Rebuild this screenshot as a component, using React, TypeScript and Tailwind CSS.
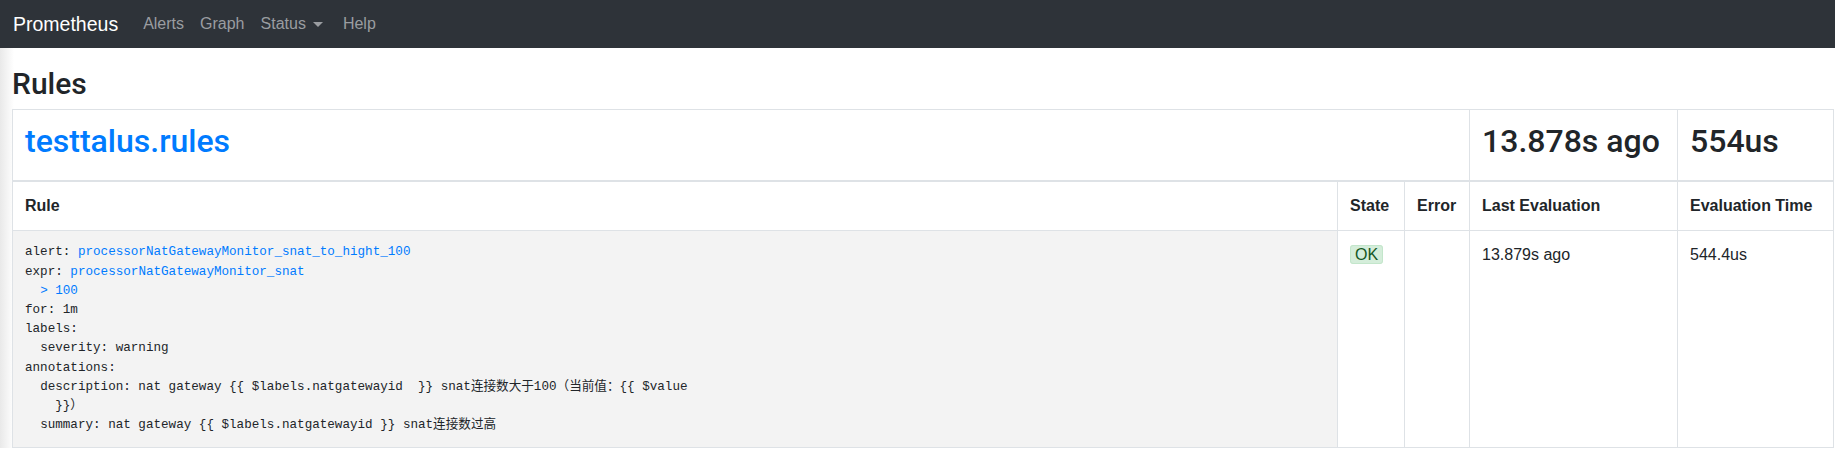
import React from "react";

function NavLink({ children }: { children: React.ReactNode }) {
  return <span className="px-2 text-[16px] leading-6 text-[#9a9da1]">{children}</span>;
}

export default function App() {
  return (
    <div className="min-h-[450px] bg-white font-['Liberation_Sans',Arial,sans-serif] text-[#212529]">
      <nav className="flex h-12 items-center bg-[#2e3339] pl-[13px]">
        <span className="mr-[17px] text-[19.5px] leading-[30px] text-white">Prometheus</span>
        <NavLink>Alerts</NavLink>
        <NavLink>Graph</NavLink>
        <span className="flex items-center pl-2 pr-3 text-[16px] leading-6 text-[#9a9da1]">
          Status
          <span className="ml-[7px] inline-block h-0 w-0 border-x-[5px] border-t-[5px] border-x-transparent border-t-[#9a9da1]" />
        </span>
        <NavLink>Help</NavLink>
      </nav>
      <div className="bg-[linear-gradient(to_right,#e9e9e9,#ffffff_14px)] pl-3 pr-[1px]">
        <h1 className="mb-[6px] pt-[17px] font-['Roboto','Liberation_Sans',sans-serif] text-[30px] leading-[38px] font-medium">Rules</h1>
        <table className="w-full table-fixed border-collapse bg-white">
          <colgroup>
            <col />
            <col className="w-[67px]" />
            <col className="w-[65px]" />
            <col className="w-[208px]" />
            <col className="w-[156px]" />
          </colgroup>
          <thead>
            <tr className="font-['Roboto','Liberation_Sans',sans-serif]">
              <td colSpan={3} className="border border-b-2 border-[#dee2e6] p-3 align-top">
                <h2 className="mb-2 text-[32px] leading-[38.4px] font-medium text-[#007bff]">testtalus.rules</h2>
              </td>
              <td className="border border-b-2 border-[#dee2e6] p-3 align-top">
                <h2 className="mb-2 whitespace-nowrap text-[32px] leading-[38.4px] font-medium">13.878s ago</h2>
              </td>
              <td className="border border-b-2 border-[#dee2e6] p-3 align-top">
                <h2 className="mb-2 text-[32px] leading-[38.4px] font-medium">554us</h2>
              </td>
            </tr>
          </thead>
          <tbody>
            <tr className="text-[16px] leading-6 font-bold">
              <td className="border border-[#dee2e6] p-3 align-top">Rule</td>
              <td className="border border-[#dee2e6] p-3 align-top">State</td>
              <td className="border border-[#dee2e6] p-3 align-top">Error</td>
              <td className="border border-[#dee2e6] p-3 align-top">Last Evaluation</td>
              <td className="border border-[#dee2e6] p-3 align-top whitespace-nowrap">Evaluation Time</td>
            </tr>
            <tr className="text-[16px] leading-6">
              <td className="border border-[#dee2e6] bg-[#f3f3f3] p-3 align-top whitespace-pre-wrap font-['Liberation_Mono','Noto_Sans_CJK_SC',monospace] text-[12.6px] leading-[19.2px]">
                {"alert: "}
                <span className="text-[#007bff]">processorNatGatewayMonitor_snat_to_hight_100</span>
                {"\nexpr: "}
                <span className="text-[#007bff]">{"processorNatGatewayMonitor_snat\n  > 100"}</span>
                {"\nfor: 1m\nlabels:\n  severity: warning\nannotations:\n  description: nat gateway {{ $labels.natgatewayid  }} snat连接数大于100（当前值：{{ $value\n    }}）\n  summary: nat gateway {{ $labels.natgatewayid }} snat连接数过高"}
              </td>
              <td className="border border-[#dee2e6] p-3 align-top">
                <span className="rounded-[3px] border border-[#c3e6cb] bg-[#d4edda] px-1 text-[#155724]">OK</span>
              </td>
              <td className="border border-[#dee2e6] p-3 align-top"></td>
              <td className="border border-[#dee2e6] p-3 align-top">13.879s ago</td>
              <td className="border border-[#dee2e6] p-3 align-top">544.4us</td>
            </tr>
          </tbody>
        </table>
      </div>
    </div>
  );
}
